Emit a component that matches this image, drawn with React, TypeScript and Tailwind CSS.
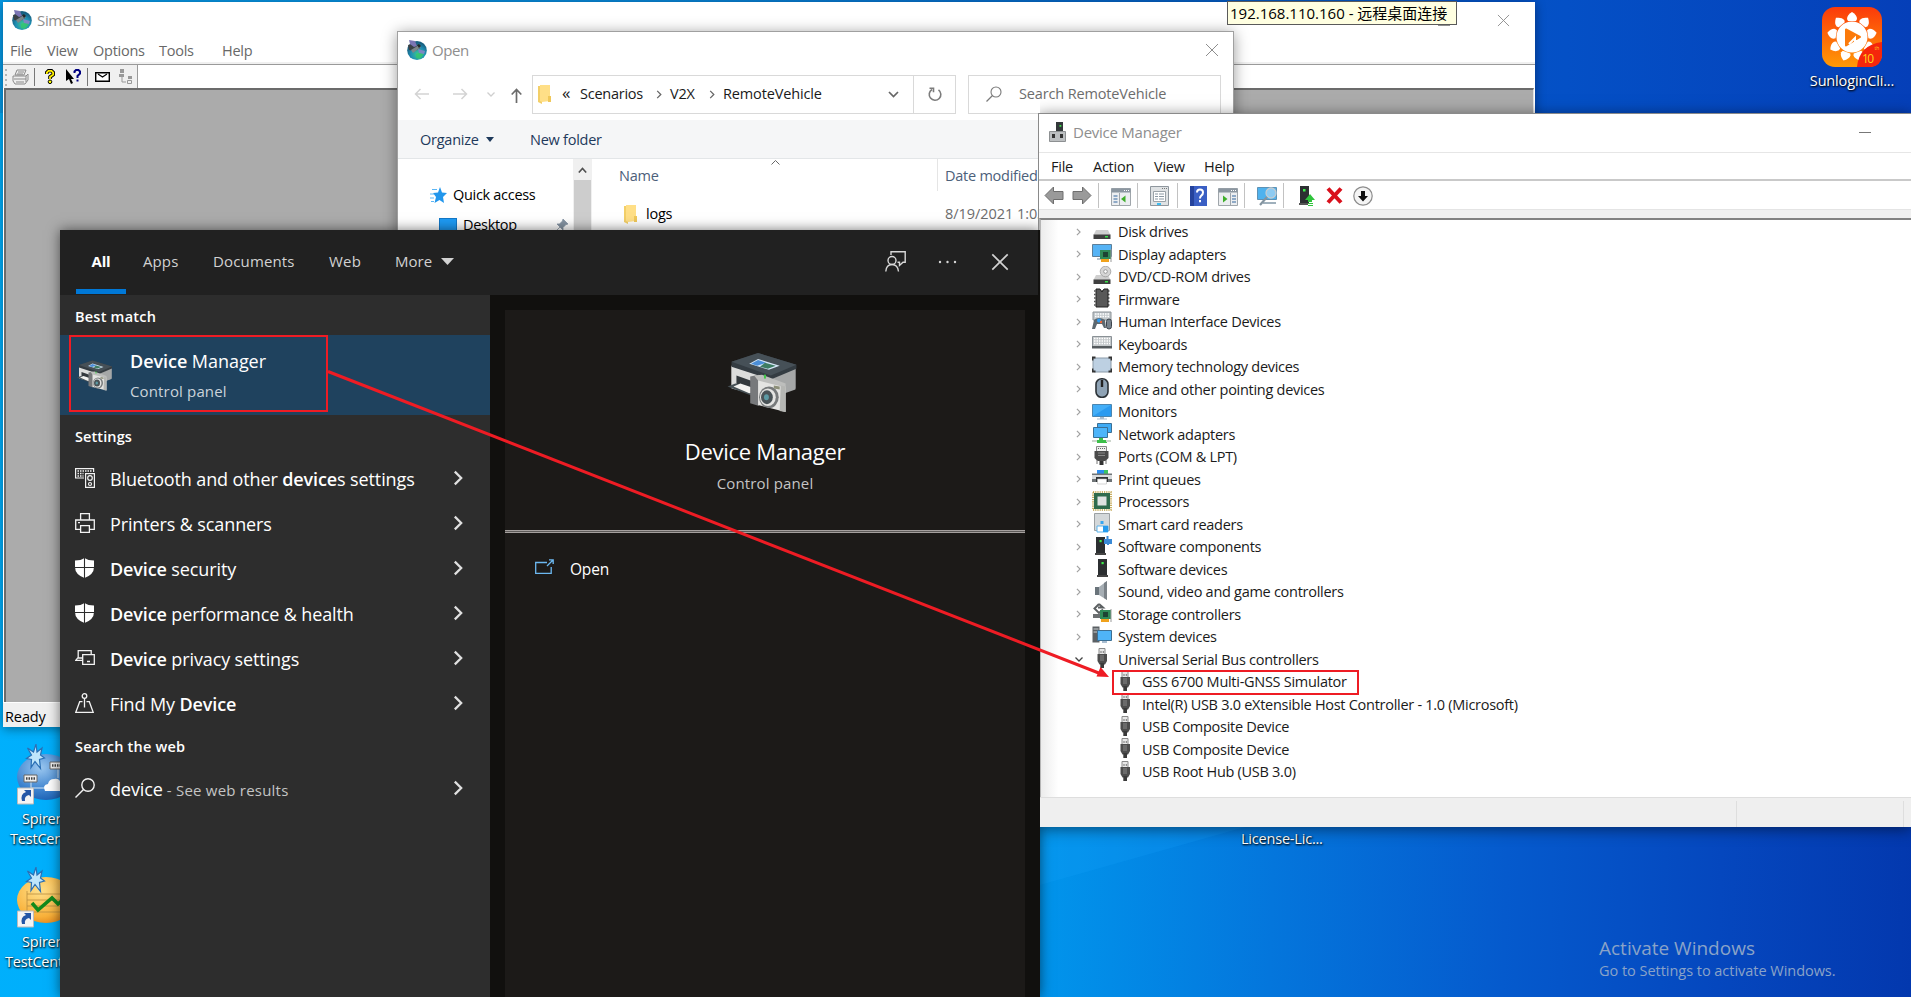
import type { ReactNode } from 'react';

const GlobeIcon = () => (
  <svg className="block h-5 w-5 shrink-0" viewBox="0 0 20 20">
    <defs>
      <radialGradient id="gl" cx="0.55" cy="0.7" r="0.6">
        <stop offset="0" stopColor="#3fc98d" />
        <stop offset="0.6" stopColor="#1f8fb4" />
        <stop offset="1" stopColor="#175f80" />
      </radialGradient>
    </defs>
    <ellipse cx="10" cy="10.5" rx="9.8" ry="9.4" fill="url(#gl)" />
    <path d="M9 14l6-2 2 2-4 5-4-1z" fill="#35c56e" opacity="0.800" />
    <path d="M1 5l7-2 5 5-5 3-6-1z" fill="#3b4146" />
    <path d="M2 0l6 1 2 5-3 1-4-3z" fill="#7b75b4" />
    <path d="M11 9l7 2-1 3-5-1z" fill="#7d86c4" />
    <path d="M4 10l8-5 2 2-8 6z" fill="#7c8689" />
    <path d="M10 5l2-1 2 2-2 2z" fill="#24282a" />
  </svg>
);

const Chevron = ({ className }: { className?: string }) => (
  <svg className={className} viewBox="0 0 6 10">
    <path d="M1 1l4 4-4 4" fill="none" stroke="currentColor" strokeWidth="1.4" />
  </svg>
);

const CloseX = ({ className, w = 1 }: { className?: string; w?: number }) => (
  <svg className={className} viewBox="0 0 14 14">
    <path d="M1 1l12 12M13 1L1 13" fill="none" stroke="currentColor" strokeWidth={w} />
  </svg>
);

const Folder = () => (
  <svg className="block h-[19px] w-[13px] shrink-0" viewBox="0 0 13 19">
    <path d="M0 1h4v18l-4-2z" fill="#f3cf68" />
    <path d="M2 0h10v16l-8 1-2-1z" fill="#ffdf87" />
    <path d="M10 11h3v6h-3z" fill="#f0c85a" />
  </svg>
);

const PrinterCamera = ({ className }: { className?: string }) => (
  <svg className={className} viewBox="0 0 70 60">
    <path d="M4 13L31 2l38 11v23L42 46 4 36z" fill="#b9bab9" />
    <path d="M4 13l40 14v18L4 34z" fill="#dcdddc" />
    <path d="M44 27l25-12v22L44 46z" fill="#a5a7a7" />
    <path d="M4 9L31 0l39 12v4L44 27 4 14z" fill="#343c42" />
    <path d="M4 9L31 0l39 12-26 11z" fill="#465057" />
    <path d="M31 6l22 7-11 4-20-6z" fill="#d5e6f7" />
    <path d="M31 7l8 3-9 3-6-2z" fill="#4b8ed8" />
    <path d="M38 10l11 3-8 3-8-2z" fill="#3e7c63" />
    <path d="M9 23l20 7v9L9 32z" fill="#33393d" />
    <path d="M0 34l8-3 24 7-6 6z" fill="#465055" />
    <path d="M6 34l7-3 15 5v4l-6 1z" fill="#f2f2f0" />
    <path d="M23 24l9-2v32l-9-3z" fill="#77797b" />
    <path d="M31 27l28 7v26l-28-7z" fill="#e4e4e2" />
    <path d="M27 23l8-1 24 9v4l-28-7z" fill="#bdbebc" />
    <path d="M54 33l5 1v26l-6-1z" fill="#b5b6b3" />
    <ellipse cx="42" cy="45" rx="10" ry="11" fill="#777a7b" />
    <ellipse cx="41" cy="45" rx="8" ry="9" fill="#e4e4e2" />
    <ellipse cx="40" cy="45" rx="6" ry="7" fill="#4a5357" />
    <ellipse cx="39.500" cy="45" rx="2.500" ry="3" fill="#5c9aa4" />
    <path d="M47 33l6 1v3l-6-1z" fill="#8d9079" />
    <rect x="37" y="22" width="2" height="4" fill="#43c94a" />
  </svg>
);

/* ---------- device tree icons (20x20) ---------- */
const usb = (
  <g>
    <path d="M7 .5h6v7H7z" fill="#e8e8e8" stroke="#8a8a8a" />
    <path d="M8.500 3h1v2h-1zM10.800 3h1v2h-1z" fill="#777" />
    <path d="M5.500 6h9.500v7l-2 3.500H7.500l-2-3.500z" fill="#4d4d4d" />
    <path d="M8 7h4v6H8z" fill="#6b6b6b" />
    <path d="M8.300 15h3.700v5H8.300z" fill="#3a3a3a" />
  </g>
);
const drive = (
  <g>
    <path d="M4 9h12l2.500 5h-17z" fill="#cfcfcf" />
    <path d="M1.500 13.500h17v4.500h-17z" fill="#3f3f3f" />
    <path d="M13 15h3v1.500h-3z" fill="#39e04a" />
  </g>
);
const board = (
  <g>
    <path d="M8 7h11v9H8z" fill="#2f8a57" />
    <path d="M11 9h5v5h-5z" fill="#1d4433" />
    <path d="M9 16h8v3H9z" fill="#f0a21c" />
    <path d="M19 6v13" stroke="#999" />
  </g>
);
const tower = (
  <g>
    <path d="M6 1h9v16H6z" fill="#2c2f31" />
    <path d="M5 17h11v2H5z" fill="#444" />
    <path d="M9.500 4h2.200v2.200H9.500z" fill="#3df04b" />
  </g>
);

const deviceIcons: Record<string, ReactNode> = {
  disk: drive,
  display: (
    <g>
      <path d="M.5 1.500h19v12H.5z" fill="#55b3f5" stroke="#5d7f99" />
      <path d="M5 15h5v2H5z" fill="#b9c6d0" />
      {board}
    </g>
  ),
  dvd: (
    <g>
      {drive}
      <circle cx="13.500" cy="5.500" r="5.300" fill="#d6d6d6" stroke="#9c9c9c" strokeWidth="0.800" />
      <circle cx="13.500" cy="5.500" r="1.800" fill="#fff" stroke="#888" strokeWidth="0.800" />
    </g>
  ),
  firmware: (
    <g>
      <path d="M2 3h16M2 6.500h16M2 10h16M2 13.500h16M2 17h16" stroke="#555" strokeWidth="1.500" strokeDasharray="1.500 0.500" />
      <path d="M4 1h4l2 3 2-3h4v18H4z" fill="#585858" stroke="#222" />
    </g>
  ),
  hid: (
    <g>
      <path d="M1 1h18v8H1z" fill="#c3c9cc" stroke="#8b9297" />
      <path d="M3 3h14M3 5.500h14" stroke="#fff" strokeWidth="1.400" strokeDasharray="1.500 1" />
      <path d="M2 9q5-4 11 0l1 8h-2l-2-4H5l-2 5H0z" fill="#5c6870" />
      <circle cx="7" cy="9.500" r="2" fill="#2f9df4" />
      <circle cx="9" cy="11" r="1.200" fill="#f06a3a" />
      <rect x="14.500" y="8" width="5" height="10" rx="2.500" fill="#77828c" stroke="#3c444c" />
    </g>
  ),
  keyboard: (
    <g>
      <path d="M.5 3.500h19v11H.5z" fill="#c5c9cb" stroke="#8a9196" />
      <path d="M2 5.500h16M2 8h16M2 10.500h16" stroke="#fff" strokeWidth="1.300" strokeDasharray="1.500 1" />
      <path d="M0 13h20v2.500H0z" fill="#565b5e" />
    </g>
  ),
  memory: (
    <g>
      <rect x="1" y="2" width="18" height="14" rx="2" fill="#bdd0e2" stroke="#8a9aa8" />
      <path d="M.5 4.500V1.500h3M16.500 1.500h3v3M19.500 12.500v3h-3M3.500 15.500h-3v-3" fill="none" stroke="#333" strokeWidth="1.800" />
    </g>
  ),
  mouse: (
    <g>
      <rect x="4" y="0.800" width="12" height="18.500" rx="5.500" fill="#8fa3b5" stroke="#2c3237" strokeWidth="1.600" />
      <path d="M10 2v7" stroke="#222" strokeWidth="2.400" />
    </g>
  ),
  monitor: (
    <g>
      <path d="M.5 3.500h19v12H.5z" fill="#43aef7" stroke="#4b86b0" />
      <path d="M1 15L19 4v11z" fill="#2b9bf0" />
      <path d="M8 16h4v1.500h3v1H5v-1h3z" fill="#a9bdd0" />
    </g>
  ),
  network: (
    <g>
      <path d="M5.500.5h14v9h-14z" fill="#3fabf5" stroke="#3b7096" />
      <path d="M1.500 4.500h14v10h-14z" fill="#4db5fa" stroke="#3b7096" />
      <path d="M7 15h4v2h4v3H5v-3h2z" fill="#3cbf49" />
      <path d="M0 17h5v2H0zM14 17h5v2h-5z" fill="#cdd6cd" />
    </g>
  ),
  ports: (
    <g>
      <path d="M4.500.5h10v5h-10z" fill="#eee" stroke="#888" />
      <path d="M6 2.500h7" stroke="#666" strokeDasharray="1 1" />
      <path d="M2.500 5h14v7l-3 3h-8l-3-3z" fill="#4a4a4a" />
      <path d="M6 7h7M6 9.500h7" stroke="#888" />
      <path d="M7.500 15h4v4h-4z" fill="#333" />
      <path d="M5 14v4M14 14v4" stroke="#777" />
    </g>
  ),
  print: (
    <g>
      <path d="M5 2h10v4H5z" fill="#2b8df0" />
      <path d="M12 2h4v4h-4z" fill="#3bc463" />
      <path d="M0 5.500h20V14H0z" fill="#6f7477" />
      <path d="M0 7h20v4H0z" fill="#d9dcde" />
      <path d="M4 9h12v5H4z" fill="#303436" />
      <path d="M5.500 11h9v5h-9z" fill="#fff" stroke="#bbb" strokeWidth="0.600" />
    </g>
  ),
  processor: (
    <g>
      <path d="M1 1h18v18H1z" fill="none" stroke="#b99a3b" strokeWidth="1.600" strokeDasharray="1.200 1" />
      <path d="M2 2h16v16H2z" fill="#2f6b4c" />
      <path d="M5.500 5.500h9v9h-9z" fill="#dfe2e0" />
    </g>
  ),
  smartcard: (
    <g>
      <path d="M2.500.5h15v17h-15z" fill="#d4d8da" stroke="#9ba0a3" />
      <path d="M8.500 8h3v3h-3z" fill="#35a5f0" />
      <path d="M5 13h11v6H5z" fill="#fff" stroke="#5bb4ee" />
      <path d="M11 13h5v6h-5z" fill="#259bee" />
    </g>
  ),
  swcomp: (
    <g>
      <g transform="translate(-2 0)">{tower}</g>
      <path d="M12 3h2.500V0h2v3H20v5h-3v1h-2V8h-3z" fill="#3a8ad6" />
    </g>
  ),
  swdev: tower,
  sound: (
    <g>
      <path d="M3 6h5v8H3z" fill="#6a747b" />
      <path d="M7 6l8-6v19l-8-5z" fill="#a6aeb4" />
      <path d="M12 2l3-2v19l-3-2z" fill="#7b8288" />
    </g>
  ),
  storage: (
    <g>
      <path d="M7 1L2.500 5.500 7 10l4-3.500M7 1l4 3.500H6" fill="none" stroke="#5b5f61" strokeWidth="2" />
      <path d="M1 11h9v4H1z" fill="#6c6f71" />
      {board}
    </g>
  ),
  system: (
    <g>
      <path d="M.5.500h7v16h-7z" fill="#5b6064" />
      <path d="M1.500 3h5M1.500 6h5" stroke="#c9ced1" />
      <path d="M5.500 4.500h14v10h-14z" fill="#4fb4f8" stroke="#3d6f93" />
      <path d="M10 15h5v2h-5z" fill="#a9bdd0" />
    </g>
  ),
  usb,
};

const devices: { icon: string; label: string; open?: boolean; child?: boolean }[] = [
  { icon: 'disk', label: 'Disk drives' },
  { icon: 'display', label: 'Display adapters' },
  { icon: 'dvd', label: 'DVD/CD-ROM drives' },
  { icon: 'firmware', label: 'Firmware' },
  { icon: 'hid', label: 'Human Interface Devices' },
  { icon: 'keyboard', label: 'Keyboards' },
  { icon: 'memory', label: 'Memory technology devices' },
  { icon: 'mouse', label: 'Mice and other pointing devices' },
  { icon: 'monitor', label: 'Monitors' },
  { icon: 'network', label: 'Network adapters' },
  { icon: 'ports', label: 'Ports (COM & LPT)' },
  { icon: 'print', label: 'Print queues' },
  { icon: 'processor', label: 'Processors' },
  { icon: 'smartcard', label: 'Smart card readers' },
  { icon: 'swcomp', label: 'Software components' },
  { icon: 'swdev', label: 'Software devices' },
  { icon: 'sound', label: 'Sound, video and game controllers' },
  { icon: 'storage', label: 'Storage controllers' },
  { icon: 'system', label: 'System devices' },
  { icon: 'usb', label: 'Universal Serial Bus controllers', open: true },
  { icon: 'usb', label: 'GSS 6700 Multi-GNSS Simulator', child: true },
  { icon: 'usb', label: 'Intel(R) USB 3.0 eXtensible Host Controller - 1.0 (Microsoft)', child: true },
  { icon: 'usb', label: 'USB Composite Device', child: true },
  { icon: 'usb', label: 'USB Composite Device', child: true },
  { icon: 'usb', label: 'USB Root Hub (USB 3.0)', child: true },
];

/* ---------- SimGEN main window ---------- */
const SimGenWindow = () => (
  <section className="absolute left-[3px] top-[2px] flex h-[725px] w-[1532px] flex-col bg-white shadow-[0_2px_10px_rgba(0,0,0,0.4)]">
    <header className="flex h-[36px] items-center pl-[9px] pr-[25px] text-[#8e8e8e]">
      <GlobeIcon />
      <span className="ml-[5px] text-[15px] tracking-[-0.35px]">SimGEN</span>
      <span className="ml-auto mt-[10px] h-px w-3 bg-[#8e8e8e]" />
      <CloseX className="ml-[47px] h-[13px] w-[13px]" />
    </header>
    <nav className="flex h-[24px] items-center pl-[7px] pt-[3px] text-[14.5px] tracking-[-0.25px] text-[#686868]">
      <span className="w-[37px]">File</span>
      <span className="w-[46px]">View</span>
      <span className="w-[66px]">Options</span>
      <span className="w-[63px]">Tools</span>
      <span>Help</span>
    </nav>
    <div className="h-[3px] border-b border-[#9a9a9a] bg-[#f0f0f0]" />
    <div className="flex h-[23px] shrink-0">
      <div className="flex w-[135px] items-center border-r border-[#9a9a9a] bg-[#f0f0f0] pl-[1px]">
        <svg className="h-[22px] w-[4px]" viewBox="0 0 4 22">
          <path d="M2 3v18" stroke="#b4b4b4" strokeWidth="2" strokeDasharray="2 3" />
        </svg>
        <svg className="ml-[4px] h-[16px] w-[17px]" viewBox="0 0 17 16">
          <path d="M5 1h9l-2 5H3zM1 7h13l2-2v6l-3 4H3l-2-3z" fill="#eee" stroke="#8a8a8a" />
          <path d="M6 3h6M5 5h6M2 10h12M4 13h8M14 7v6" stroke="#8a8a8a" />
        </svg>
        <span className="ml-[5px] h-[18px] w-px bg-[#777]" />
        <svg className="ml-[10px] h-[15px] w-[10px]" viewBox="0 0 10 15">
          <path d="M1.800 5V3.500L3.500 1.800h3L8.200 3.500V5.500L5 8v2" fill="none" stroke="#000" strokeWidth="3.600" />
          <path d="M1.800 5V3.500L3.500 1.800h3L8.200 3.500V5.500L5 8v2" fill="none" stroke="#fff000" strokeWidth="1.800" />
          <circle cx="5" cy="12.800" r="1.800" fill="#ff0" stroke="#000" />
        </svg>
        <svg className="ml-[11px] h-[15px] w-[15px]" viewBox="0 0 15 15">
          <path d="M0 0v12l3-2 2 5 2-1-2-4h3z" fill="#000" />
          <path d="M8.500 4V2.500L10 1h2.500L14 2.500v2L11.500 7v2M11.500 10.500v2" fill="none" stroke="#000080" strokeWidth="2" />
        </svg>
        <span className="ml-[6px] h-[18px] w-px bg-[#777]" />
        <svg className="ml-[7px] h-[10px] w-[15px]" viewBox="0 0 15 10">
          <path d="M.7.700h13.600v8.600H.7z" fill="#fff" stroke="#000" strokeWidth="1.400" />
          <path d="M3 2l4.500 3L12 2" fill="none" stroke="#000" strokeWidth="1.200" />
        </svg>
        <svg className="ml-[9px] h-[15px] w-[13px]" viewBox="0 0 13 15">
          <path d="M1 0h4v4H1zM0 5h5v3H0zM9 7h4v3H9z" fill="#999" />
          <path d="M3 8v5h4M8.500 11.500h4v3h-4z" fill="none" stroke="#999" />
        </svg>
      </div>
    </div>
    <div className="mx-[1px] flex-1 border-l-2 border-t-2 border-r-[1px] border-[#6b6b6b] border-r-[#e3e3e3] bg-[#ababab]" />
    <footer className="flex h-[25px] shrink-0 items-center border-t border-[#fff] bg-[#f0f0f0] pl-[2px] pt-[4px] text-[14.500px] tracking-[-0.1px] text-black">
      Ready
    </footer>
  </section>
);

/* ---------- Open dialog ---------- */
const OpenDialog = () => (
  <section className="absolute left-[397px] top-[31px] flex h-[240px] w-[837px] flex-col border border-[#a0a0a0] bg-white shadow-[0_2px_14px_rgba(0,0,0,0.4)]">
    <header className="flex h-[36px] items-center pl-[9px] pr-[14px] text-[#8e8e8e]">
      <GlobeIcon />
      <span className="ml-[5px] text-[15px] tracking-[-0.4px]">Open</span>
      <CloseX className="ml-auto h-[14px] w-[14px]" />
    </header>
    <div className="flex h-[52px] items-center pl-[16px] text-[14.500px] tracking-[-0.25px] text-[#1a1a1a]">
      <svg className="h-[12px] w-[15px]" viewBox="0 0 15 12">
        <path d="M15 6H1.500M6.500 1l-5 5 5 5" fill="none" stroke="#d3d3d3" strokeWidth="1.500" />
      </svg>
      <svg className="ml-[24px] h-[12px] w-[15px]" viewBox="0 0 15 12">
        <path d="M0 6h13.500M8.500 1l5 5-5 5" fill="none" stroke="#d3d3d3" strokeWidth="1.500" />
      </svg>
      <svg className="ml-[19px] h-[5px] w-[8px]" viewBox="0 0 8 5">
        <path d="M.5.500L4 4 7.500.500" fill="none" stroke="#cfcfcf" strokeWidth="1.300" />
      </svg>
      <svg className="ml-[16px] mt-[3px] h-[15px] w-[11px]" viewBox="0 0 11 15">
        <path d="M5.500 15V1.500M.700 6.500l4.800-5 4.800 5" fill="none" stroke="#6b6b6b" strokeWidth="1.700" />
      </svg>
      <div className="ml-[10px] flex h-[39px] w-[424px] items-center border border-[#d9d9d9]">
        <div className="flex h-full w-[381px] shrink-0 items-center border-r border-[#d9d9d9] pl-[5px]">
          <Folder />
          <span className="ml-[11px] mt-[-4px] w-[18px] text-[17px]">«</span>
          <span className="w-[76px]">Scenarios</span>
          <Chevron className="h-[9px] w-[6px] text-[#666]" />
          <span className="ml-[8px] w-[39px]">V2X</span>
          <Chevron className="h-[9px] w-[6px] text-[#666]" />
          <span className="ml-[8px] tracking-[-0.15px]">RemoteVehicle</span>
          <svg className="ml-auto mr-[14px] h-[7px] w-[11px]" viewBox="0 0 11 7">
            <path d="M1 1l4.500 4.500L10 1" fill="none" stroke="#666" strokeWidth="1.700" />
          </svg>
        </div>
        <svg className="ml-[14px] h-[15px] w-[14px]" viewBox="0 0 14 15">
          <path d="M10.500 2.800A5.800 5.800 0 1 1 4 2.500M1.500 1.200h4v4" fill="none" stroke="#7c7c7c" strokeWidth="1.600" />
        </svg>
      </div>
      <div className="ml-[12px] flex h-[39px] w-[253px] items-center border border-[#d9d9d9] pl-[17px] text-[#6d6d6d]">
        <svg className="h-[16px] w-[16px]" viewBox="0 0 16 16">
          <circle cx="10" cy="6" r="5" fill="none" stroke="#7a7a7a" strokeWidth="1.100" />
          <path d="M6.500 9.500L.500 15.500" stroke="#7a7a7a" strokeWidth="1.200" />
        </svg>
        <span className="ml-[17px] tracking-[-0.15px]">Search RemoteVehicle</span>
      </div>
    </div>
    <div className="flex h-[39px] items-center border-b border-[#e3e6e8] bg-[#f5f6f7] pl-[22px] pt-[2px] text-[14.500px] tracking-[-0.25px] text-[#1e395b]">
      <span className="w-[66px]">Organize</span>
      <svg className="mb-[2px] h-[5px] w-[8px]" viewBox="0 0 8 5">
        <path d="M0 0h8L4 5z" fill="#1e395b" />
      </svg>
      <span className="ml-[36px]">New folder</span>
    </div>
    <div className="flex flex-1">
      <div className="flex w-[175px] flex-col pt-[21px] text-[14.500px] tracking-[-0.3px] text-black">
        <div className="flex h-[30px] items-center pl-[32px]">
          <svg className="h-[17px] w-[17px]" viewBox="0 0 17 17">
            <path d="M10 0l2 5.500 5 .5-4 4 1 6-4.500-3L4.500 16l1.500-6-3-4 5-.5z" fill="#2196ec" />
            <path d="M2 2.500h5M0 7h4M0 11h4M1 14.500h3" stroke="#5bb6f5" />
          </svg>
          <span className="ml-[6px]">Quick access</span>
        </div>
        <div className="flex h-[30px] items-center pl-[41px]">
          <span className="h-[15px] w-[18px] border border-[#1378c8] bg-[#1e9bf5]" />
          <span className="ml-[6px]">Desktop</span>
          <svg className="ml-auto mr-[5px] h-[13px] w-[13px]" viewBox="0 0 13 13">
            <path d="M8 0l5 5-2 .5-3 3V11L2 5h2.500l3-3zM5 8l-5 5" fill="#8594a3" stroke="#8594a3" strokeWidth="0.800" />
          </svg>
        </div>
      </div>
      <div className="flex w-[19px] flex-col items-center border-x border-[#f0f0f0] bg-[#cdcdcd]">
        <div className="flex h-[21px] w-full items-center justify-center bg-[#f0f0f0]">
          <svg className="h-[6px] w-[9px]" viewBox="0 0 9 6">
            <path d="M.8 5.500l3.700-4 3.700 4" fill="none" stroke="#505050" strokeWidth="1.600" />
          </svg>
        </div>
      </div>
      <div className="flex flex-1 flex-col text-[14.500px] tracking-[-0.25px]">
        <div className="flex h-[32px] items-center text-[#4c607a]">
          <div className="flex h-full w-[346px] items-center border-r border-[#e5e5e5] pl-[27px]">
            <span className="mt-[2px]">Name</span>
            <svg className="mb-[25px] ml-[112px] h-[5px] w-[9px]" viewBox="0 0 9 5">
              <path d="M.5 4.500l4-4 4 4" fill="none" stroke="#666" />
            </svg>
          </div>
          <span className="ml-[7px] mt-[2px]">Date modified</span>
        </div>
        <div className="mt-[7px] flex h-[32px] items-center">
          <div className="flex w-[353px] items-center pl-[32px] text-black">
            <Folder />
            <span className="ml-[9px]">logs</span>
          </div>
          <span className="tracking-[-0.05px] text-[#6d6d6d]">8/19/2021 1:03 PM</span>
        </div>
      </div>
    </div>
  </section>
);

/* ---------- Device Manager ---------- */
const ToolSep = ({ className }: { className: string }) => <span className={`h-[25px] w-px shrink-0 bg-[#c2c2c2] ${className}`} />;

const PanelIcon = ({ className, flip = false }: { className: string; flip?: boolean }) => (
  <svg className={`mt-[2px] h-[18px] w-[20px] shrink-0 ${className}`} viewBox="0 0 20 18">
    <path d="M.5.500h19v17H.5z" fill="#eceef0" stroke="#a0a6ab" />
    <path d="M.5.500h19v4H.5z" fill="#8b96a0" />
    <path d="M13 2.500h5" stroke="#fff" strokeDasharray="1 1" />
    {flip ? (
      <>
        <path d="M12.500 5v12" stroke="#a0a6ab" />
        <path d="M14 8h4M14 11h4M14 14h4" stroke="#6f93b8" strokeWidth="1.500" />
        <path d="M5 7.500v7l4.500-3.500z" fill="#3fae2a" />
      </>
    ) : (
      <>
        <path d="M8.500 5v12" stroke="#a0a6ab" />
        <path d="M2.500 8h4M2.500 11h4M2.500 14h4" stroke="#6f93b8" strokeWidth="1.500" />
        <path d="M14.500 7.500v7L10 11z" fill="#3fae2a" />
      </>
    )}
  </svg>
);

const DeviceManagerWindow = () => (
  <section className="absolute left-[1038px] top-[113px] flex h-[714px] w-[874px] flex-col overflow-hidden border-l border-t border-[#8a8a8a] bg-white">
    <header className="flex h-[39px] shrink-0 items-center border-b border-[#e6e6e6] pb-[2px] pl-[10px] pr-[41px] text-[#8e8e8e]">
      <svg className="h-[20px] w-[17px]" viewBox="0 0 17 20">
        <path d="M7 0h7v10H7z" fill="#33383a" />
        <path d="M10.500 3h1.800v1.800h-1.800z" fill="#3fe04e" />
        <path d="M.5 9.500h16v10H.5z" fill="#bcbfc1" stroke="#8d9092" />
        <path d="M3 12h3v4H3zM11 12h3v4h-3z" fill="#333" />
      </svg>
      <span className="ml-[7px] text-[15px] tracking-[-0.25px]">Device Manager</span>
      <span className="ml-auto h-px w-3 bg-[#777]" />
    </header>
    <nav className="flex h-[28px] shrink-0 items-center border-b-2 border-[#c9c9c9] pl-[12px] pt-[2px] text-[14.500px] tracking-[-0.25px] text-[#1a1a1a]">
      <span className="w-[42px]">File</span>
      <span className="w-[61px]">Action</span>
      <span className="w-[50px]">View</span>
      <span>Help</span>
    </nav>
    <div className="flex h-[28px] shrink-0 items-center pl-[5px] pt-[1px]">
      <svg className="h-[19px] w-[20px] shrink-0" viewBox="0 0 20 19">
        <path d="M1 9.500L9.500 1v4.500H19v8H9.500V18z" fill="#9a9a9a" stroke="#6e6e6e" />
      </svg>
      <svg className="ml-[8px] h-[19px] w-[20px] shrink-0" viewBox="0 0 20 19">
        <path d="M19 9.500L10.500 1v4.500H1v8h9.500V18z" fill="#9a9a9a" stroke="#6e6e6e" />
      </svg>
      <ToolSep className="ml-[6px]" />
      <PanelIcon className="ml-[12px]" />
      <ToolSep className="ml-[6px]" />
      <svg className="ml-[12px] h-[20px] w-[19px] shrink-0" viewBox="0 0 19 20">
        <path d="M.5.500h18v19H.5z" fill="#dfe2e4" stroke="#8f979e" />
        <path d="M3.500 5.500h12v10h-12z" fill="#fff" stroke="#9aa2a8" />
        <path d="M5 8h3M5 10.500h3M5 13h3M9 8h5M9 10.500h5M9 13h5" stroke="#8b98a3" />
        <path d="M7 17h4v2H7z" fill="#3ebcf0" />
        <path d="M12 2.500h5" stroke="#777" strokeDasharray="1 1" />
      </svg>
      <ToolSep className="ml-[8px]" />
      <svg className="ml-[12px] h-[20px] w-[17px] shrink-0" viewBox="0 0 17 20">
        <path d="M0 0h17v20H0z" fill="#3a5fc4" />
        <path d="M0 0h4v20H0z" fill="#24429c" />
        <path d="M7 6.500Q7 3.500 10 3.500t3 3q0 1.800-1.500 2.800T10 12.500M10 14v2.200" fill="none" stroke="#fff" strokeWidth="2" />
      </svg>
      <PanelIcon className="ml-[11px]" flip />
      <ToolSep className="ml-[6px]" />
      <svg className="ml-[12px] h-[20px] w-[20px] shrink-0" viewBox="0 0 20 20">
        <path d="M.5 1.500h19v12H.5z" fill="#4fb2ee" stroke="#5e92b5" />
        <path d="M6 16h13v2H6z" fill="#9fb0bc" />
        <circle cx="14" cy="7" r="5" fill="#8ecbf2" stroke="#c3ccd2" strokeWidth="1.300" />
        <path d="M10 11l-7 8" stroke="#8494a0" strokeWidth="2.200" />
      </svg>
      <ToolSep className="ml-[6px]" />
      <svg className="ml-[15px] h-[20px] w-[16px] shrink-0" viewBox="0 0 16 20">
        <path d="M1 0h9v17H1z" fill="#2c2f31" />
        <path d="M0 17h9v2H0z" fill="#555" />
        <path d="M4 3h2.500v2.500H4z" fill="#3df04b" />
        <path d="M11 8l5 6h-3v2H9v-2H6zM9 17h5v1H9zM9 19h5v1H9z" fill="#2fc43b" />
      </svg>
      <svg className="ml-[11px] h-[17px] w-[17px] shrink-0" viewBox="0 0 17 17">
        <path d="M2 1.500l13 14M15 1.500l-13 14" stroke="#d9101c" strokeWidth="4" />
      </svg>
      <svg className="ml-[10px] h-[20px] w-[20px] shrink-0" viewBox="0 0 20 20">
        <circle cx="10" cy="10" r="9.200" fill="#f4f4f4" stroke="#8c8c8c" strokeWidth="1.200" />
        <path d="M8 5h4v5h3l-5 5.500L5 10h3z" fill="#111" />
      </svg>
    </div>
    <div className="h-[9px] shrink-0 border-t border-[#e4e4e4] bg-[#f0f0f0]" />
    <ul className="flex flex-1 flex-col border-l-2 border-t-2 border-[#828282] border-l-[#b5b5b5] bg-gradient-to-r from-[#ececec] to-white to-[2%] text-[14.500px] tracking-[-0.28px] text-[#1a1a1a]">
      {devices.map((d, i) => (
        <li key={i} className={d.child ? 'flex h-[22.5px] shrink-0 items-center pl-[74px]' : 'flex h-[22.5px] shrink-0 items-center pl-[34px]'}>
          {!d.child && (
            <span className="mt-[1px] flex w-[17px] items-center">
              {d.open ? (
                <svg className="h-[5px] w-[8px]" viewBox="0 0 8 5">
                  <path d="M.5.500L4 4 7.500.500" fill="none" stroke="#444" strokeWidth="1.300" />
                </svg>
              ) : (
                <Chevron className="ml-[1px] h-[8px] w-[5px] text-[#a0a0a0]" />
              )}
            </span>
          )}
          <svg className="mt-[-1px] h-[20px] w-[20px] shrink-0" viewBox="0 0 20 20">
            {deviceIcons[d.icon]}
          </svg>
          <span className={d.child ? 'ml-[7px] mt-[2px] whitespace-nowrap' : 'ml-[6px] mt-[2px] whitespace-nowrap'}>{d.label}</span>
        </li>
      ))}
    </ul>
    <footer className="flex h-[30px] shrink-0 border-t border-[#dedede] bg-[#efefef] pt-[3px]">
      <div className="w-[698px] border-r border-[#dedede]" />
      <div className="w-[167px] border-r border-[#dedede]" />
    </footer>
  </section>
);

/* ---------- Start search panel ---------- */
const Shield = () => (
  <svg className="h-[20px] w-[20px]" viewBox="0 0 20 20">
    <path d="M9.500 0Q13 2.500 19 2.500V9q0 7.500-9.500 11Q0 16.500 0 9V2.500Q6 2.500 9.500 0z" fill="#fff" />
    <path d="M9.500 0v20M0 9.500h19" stroke="#2d2d2d" strokeWidth="1.100" />
  </svg>
);

const settings: { icon: ReactNode; label: ReactNode }[] = [
  {
    icon: (
      <svg className="h-[20px] w-[20px]" viewBox="0 0 20 20" fill="none" stroke="#f2f2f2" strokeWidth="1.200">
        <path d="M9 10H.6V.6h18V4" />
        <path d="M2.500 3h15M2.500 5.500h6M2.500 8h6" strokeDasharray="1.500 1" strokeWidth="1.500" />
        <path d="M10.600 5.600h8.800v13.800h-8.800z" />
        <circle cx="15" cy="10" r="2.300" />
        <circle cx="15" cy="16" r="1.500" />
      </svg>
    ),
    label: (
      <>
        Bluetooth and other <b className="font-semibold">device</b>s settings
      </>
    ),
  },
  {
    icon: (
      <svg className="h-[20px] w-[20px]" viewBox="0 0 20 20" fill="none" stroke="#f2f2f2" strokeWidth="1.300">
        <path d="M5.600 7V.7h8.800V7M5 16.400H.7V7h18.600v9.400H15M5.600 12.600h8.800v6.700H5.600zM3 9.700h2" />
      </svg>
    ),
    label: 'Printers & scanners',
  },
  { icon: <Shield />, label: (<><b className="font-semibold">Device</b> security</>) },
  { icon: <Shield />, label: (<><b className="font-semibold">Device</b> performance & health</>) },
  {
    icon: (
      <svg className="h-[20px] w-[20px]" viewBox="0 0 20 20" fill="none" stroke="#f2f2f2" strokeWidth="1.300">
        <path d="M8 12.300H.8l2.400-3V2.700h13V6M7.700 6.700h11.600v9.600H7.700zM3.200 10h4M12 13.500h3" />
      </svg>
    ),
    label: (<><b className="font-semibold">Device</b> privacy settings</>),
  },
  {
    icon: (
      <svg className="h-[20px] w-[20px]" viewBox="0 0 20 20" fill="none" stroke="#f2f2f2" strokeWidth="1.300">
        <circle cx="9.500" cy="3" r="2.300" />
        <path d="M9.500 5.500v9M7.500 8.700H4.700L.8 19.300h17.400L14.300 8.700h-2.800" />
      </svg>
    ),
    label: (<>Find My <b className="font-semibold">Device</b></>),
  },
];

const SearchPanel = () => (
  <section className="absolute left-[60px] top-[230px] flex h-[767px] w-[980px] flex-col bg-[#212121] text-white shadow-[0_0_12px_rgba(0,0,0,0.55)]">
    <header className="flex h-[65px] shrink-0 items-center pb-[2px] pl-[16px] pr-[31px] text-[15px] text-[#d2d2d2]">
      <div className="mb-[-2px] flex h-[65px] w-[50px] flex-col items-center justify-end">
        <span className="font-bold leading-5 tracking-[-0.2px] text-white">All</span>
        <span className="mb-[1px] mt-[18px] h-[5px] w-full bg-[#0078d7]" />
      </div>
      <span className="ml-[17px] w-[70px] tracking-[0.1px]">Apps</span>
      <span className="w-[116px] tracking-[0.15px]">Documents</span>
      <span className="w-[66px] tracking-[0.2px]">Web</span>
      <span className="w-[46px]">More</span>
      <svg className="h-[7px] w-[13px]" viewBox="0 0 13 7">
        <path d="M0 0h13L6.500 7z" fill="#d2d2d2" />
      </svg>
      <svg className="ml-auto h-[21px] w-[21px]" viewBox="0 0 21 21" fill="none" stroke="#d8d8d8" strokeWidth="1.400">
        <path d="M6 4V.8h14.200v10.400H18l-3.500 3.200v-3.200h-2" />
        <circle cx="7" cy="9.500" r="4" />
        <path d="M.8 20.500q.5-7 6.200-7t6.500 7" />
      </svg>
      <svg className="ml-[32px] h-[4px] w-[19px]" viewBox="0 0 19 4" fill="#d8d8d8">
        <circle cx="2" cy="2" r="1.200" />
        <circle cx="9.500" cy="2" r="1.200" />
        <circle cx="17" cy="2" r="1.200" />
      </svg>
      <CloseX className="ml-[34px] h-[18px] w-[18px]" w={1.300} />
    </header>
    <div className="flex flex-1">
      <div className="flex w-[430px] flex-col bg-[#2d2d2d]">
        <h2 className="flex h-[40px] items-center pl-[15px] pt-[5px] text-[14.500px] font-semibold tracking-[0.22px]">Best match</h2>
        <div className="flex h-[80px] items-center bg-[#1f425e] pl-[17px]">
          <PrinterCamera className="h-[31px] w-[35px]" />
          <div className="ml-[18px] flex flex-col pt-[2px]">
            <span className="text-[18px] leading-[24px] tracking-[-0.05px]">
              <b className="font-semibold">Device</b> Manager
            </span>
            <span className="mt-[6px] text-[15px] leading-[24px] tracking-[0.15px] text-[#cbd3da]">Control panel</span>
          </div>
        </div>
        <h2 className="flex h-[40px] items-center pl-[15px] pt-[4px] text-[14.500px] font-semibold tracking-[0.1px]">Settings</h2>
        <ul className="flex flex-col">
          {settings.map((s, i) => (
            <li key={i} className="flex h-[45px] items-center pl-[15px] pr-[27px]">
              {s.icon}
              <span className="ml-[15px] mt-[2px] text-[18px] tracking-[-0.12px]">{s.label}</span>
              <Chevron className="ml-auto h-[16px] w-[10px] text-[#e0e0e0]" />
            </li>
          ))}
        </ul>
        <h2 className="flex h-[40px] items-center pl-[15px] pt-[4px] text-[14.500px] font-semibold tracking-[0.2px]">Search the web</h2>
        <div className="flex h-[45px] items-center pl-[15px] pr-[27px]">
          <svg className="h-[20px] w-[20px]" viewBox="0 0 20 20" fill="none" stroke="#f2f2f2" strokeWidth="1.400">
            <circle cx="13" cy="7" r="6.200" />
            <path d="M8.500 11.500L.5 19.500" />
          </svg>
          <span className="ml-[15px] mt-[2px] text-[18px] tracking-[-0.12px]">
            device<span className="text-[15px] tracking-[0.22px] text-[#c4c4c4]"> - See web results</span>
          </span>
          <Chevron className="ml-auto h-[16px] w-[10px] text-[#e0e0e0]" />
        </div>
      </div>
      <div className="flex flex-1 bg-[#11100e] px-[15px] pt-[15px]">
        <div className="flex flex-1 flex-col bg-[#1c1a18]">
          <div className="flex h-[220px] flex-col items-center pt-[43px]">
            <PrinterCamera className="mr-[6px] h-[59px] w-[72px]" />
            <span className="mt-[24px] text-[22px] leading-[30px] tracking-[-0.28px]">Device Manager</span>
            <span className="mt-[5px] text-[15px] leading-[24px] tracking-[0.15px] text-[#c4c4c4]">Control panel</span>
          </div>
          <div className="h-[3px] border-y border-[#a5a09e] bg-[#5e5b59]" />
          <div className="mt-[22px] flex h-[28px] items-center pl-[30px]">
            <svg className="mb-[6px] h-[15px] w-[19px]" viewBox="0 0 19 15" fill="none" stroke="#6cb8f0" strokeWidth="1.300">
              <path d="M12 3.500H.7v10.800h15.500V8M12 7l6-6M14 .8h4.200V5" />
            </svg>
            <span className="ml-[16px] mt-[1px] text-[15.500px] tracking-[-0.200px]">Open</span>
          </div>
        </div>
      </div>
    </div>
  </section>
);

/* ---------- Desktop ---------- */
const Shortcut = ({ chart = false }: { chart?: boolean }) => (
  <svg className="block h-[62px] w-[60px]" viewBox="0 0 60 62">
    <defs>
      <radialGradient id="blueball" cx="0.4" cy="0.3" r="0.8">
        <stop offset="0" stopColor="#9cc8f0" />
        <stop offset="0.6" stopColor="#3d83cf" />
        <stop offset="1" stopColor="#1559ad" />
      </radialGradient>
      <radialGradient id="goldball" cx="0.4" cy="0.3" r="0.8">
        <stop offset="0" stopColor="#ffe08a" />
        <stop offset="0.7" stopColor="#f9b13a" />
        <stop offset="1" stopColor="#e07f16" />
      </radialGradient>
    </defs>
    <ellipse cx="29" cy="33" rx="29" ry="23" fill={chart ? 'url(#goldball)' : 'url(#blueball)'} />
    {chart ? (
      <>
        <path d="M10 27h48M10 33h48M10 39h48M10 45h48M10 24v26" stroke="#b98d3f" strokeWidth="0.800" />
        <path d="M15 36l6 7 14-12 6 6 14-11" fill="none" stroke="#128a1c" strokeWidth="3.500" />
      </>
    ) : (
      <>
        <path d="M14 34v10h14M41 24v10" fill="none" stroke="#d3e6f6" />
        <path d="M7 31h13v7H7zM33 18h14v7H33z" fill="#efefef" stroke="#666" />
        <path d="M9 34.500h9M35 21.500h9" stroke="#444" strokeWidth="2.500" strokeDasharray="1.500 1" />
        <path d="M28 47q-3-6 3-7 1-5 6-5 6-1 7 5 6 1 3 7z" fill="#fff" />
      </>
    )}
    <path d="M19 0l1 8 5-4-1.500 7 4 3-5 1.500 1 9-5.500-7-4 6 .500-8-5-1 5-3.500-4-7 6 4z" fill="#bfe6fb" stroke="#2a6fb5" strokeWidth="1.200" />
    <path d="M.500 44h16v16H.500z" fill="#f4f4f4" stroke="#bbb" />
    <path d="M5 57q-2-7 4-9l-2-2h7v7l-2-2q-5 1-4 6z" fill="#2456a6" />
  </svg>
);

const labelShadow = '[text-shadow:1px_1px_2px_rgba(0,0,0,0.9),0_1px_2px_rgba(0,0,0,0.6)]';

export default function App() {
  return (
    <main className="relative h-[997px] w-[1911px] overflow-hidden bg-[linear-gradient(92deg,#00b0fc_0%,#00a6f8_35%,#0195ec_55%,#0476dc_67%,#055acd_79%,#0547be_90%,#0338ae_100%)] font-['Open_Sans','Noto_Sans_CJK_SC',sans-serif] leading-none">
      <div className="absolute left-0 top-0 h-[113px] w-full bg-[linear-gradient(90deg,#069ae6_0%,#0785d6_35%,#0459bf_65%,#0450c6_82%,#053fb8_100%)]" />
      <svg className="absolute left-[1040px] top-[827px] h-[60px] w-[210px]" viewBox="0 0 210 60">
        <path d="M0 0h205L0 58z" fill="#1aa6ff" opacity="0.180" />
      </svg>

      <div className="absolute left-[1797px] top-[7px] flex w-[110px] flex-col items-center text-white">
        <svg className="h-[60px] w-[60px]" viewBox="0 0 60 60">
          <defs>
            <linearGradient id="sun" x1="0" y1="0" x2="0" y2="1">
              <stop offset="0" stopColor="#fb3a0a" />
              <stop offset="1" stopColor="#ff9a06" />
            </linearGradient>
          </defs>
          <rect width="60" height="60" rx="13" fill="url(#sun)" />
          {[0, 40, 80, 120, 160, 200, 240, 280, 320].map((a) => (
            <path key={a} d="M25 12q0-4 5-7 5 3 5 7l-1 2h-8z" fill="#fff" transform={`rotate(${a} 30 30)`} />
          ))}
          <circle cx="30" cy="30" r="15.500" fill="#fff" />
          <path d="M24 22.500v16L38 30z" fill="#fb7a0b" stroke="#fb7a0b" strokeWidth="2" strokeLinejoin="round" />
          <path d="M27 37l6-6v3h5" fill="none" stroke="#fff" strokeWidth="2" />
          <path d="M35 60q2-22 25-25v14q-1 10-11 11z" fill="#f5260b" />
          <text x="40" y="56" fontSize="12" fill="#ffd21c" textLength="12">10</text>
          <text x="52.500" y="43" fontSize="5" fill="#ffd21c">th</text>
        </svg>
        <span className={`mt-[5px] text-[14.500px] leading-[18px] tracking-[-0.150px] ${labelShadow}`}>SunloginCli...</span>
      </div>

      <div className="absolute left-[17px] top-[744px] flex flex-col text-white">
        <Shortcut />
        <div className={`ml-[-12px] mt-[3px] flex flex-col whitespace-nowrap text-[14.500px] leading-5 tracking-[-0.200px] ${labelShadow}`}>
          <span className="pl-[17px]">Spirent</span>
          <span className="pl-[5px]">TestCenter</span>
        </div>
        <div className="mt-[18px]">
          <Shortcut chart />
        </div>
        <div className={`ml-[-12px] mt-[3px] flex flex-col whitespace-nowrap text-[14.500px] leading-5 tracking-[-0.200px] ${labelShadow}`}>
          <span className="pl-[17px]">Spirent</span>
          <span>TestCenter</span>
        </div>
      </div>

      <span className={`absolute left-[1241px] top-[830px] text-[14.500px] leading-[18px] tracking-[-0.2px] text-white ${labelShadow}`}>License-Lic...</span>

      <div className="absolute left-[1599px] top-[934px] flex flex-col text-[#8aa3c8]">
        <span className="text-[19px] leading-7">Activate Windows</span>
        <span className="mt-[-1px] text-[14.500px] leading-5 tracking-[-0.03px]">Go to Settings to activate Windows.</span>
      </div>

      <SimGenWindow />
      <OpenDialog />
      <SearchPanel />
      <div className="absolute left-[1038px] top-[113px] h-[714px] w-[873px] shadow-[0_2px_14px_rgba(0,0,0,0.5)] [clip-path:inset(-20px_0_-20px_2px)]" />
      <DeviceManagerWindow />
      <div className="absolute left-[1038px] top-[230px] h-[597px] w-[2px] bg-[#11100e]" />

      <div className="absolute left-[1227px] top-[1px] flex h-[24px] w-[230px] items-center whitespace-nowrap border border-[#5a5a5a] bg-[#ffffe1] pl-[2px] text-[15px] text-black">
        192.168.110.160 - 远程桌面连接
      </div>

      <div className="absolute left-[69px] top-[335px] h-[77px] w-[259px] border-2 border-[#ee1c24]" />
      <div className="absolute left-[1112px] top-[670px] h-[25px] w-[247px] border-2 border-[#ee1c24]" />
      <svg className="pointer-events-none absolute left-0 top-0 h-full w-full" viewBox="0 0 1911 997">
        <path d="M328 371.500L1100 673.500" stroke="#ee1c24" strokeWidth="3" />
        <path d="M1109 677l-12.500-.5 4-9.500z" fill="#ee1c24" />
      </svg>
    </main>
  );
}
